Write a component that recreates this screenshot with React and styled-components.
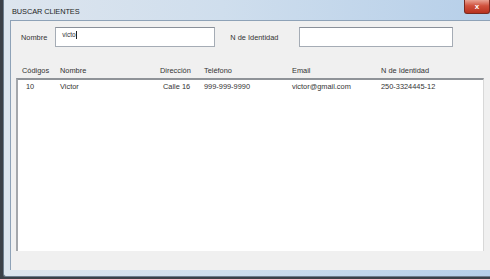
import styled, { createGlobalStyle } from 'styled-components';

const GlobalStyle = createGlobalStyle`
  html, body {
    margin: 0;
    padding: 0;
    background: #3b4048;
    overflow: hidden;
  }
  * { box-sizing: border-box; }
`;

const columns = [
  { title: 'Códigos', width: 38 },
  { title: 'Nombre', width: 100 },
  { title: 'Dirección', width: 44 },
  { title: 'Teléfono', width: 88 },
  { title: 'Email', width: 89 },
  { title: 'N de Identidad', width: 100 },
];

const rows = [
  ['10', 'Victor', 'Calle 16', '999-999-9990', 'victor@gmail.com', '250-3324445-12'],
];

export default function App() {
  return (<>
    <GlobalStyle />
    <Desktop>
      <Window>
        <TitleBar>
          <Title>BUSCAR CLIENTES</Title>
          <CloseButton>x</CloseButton>
        </TitleBar>
        <Client>
          <SearchRow>
            <Label>Nombre</Label>
            <TextBox $width={160}>
              victo<Caret />
            </TextBox>
            <Label $gap={15}>N de Identidad</Label>
            <TextBox $width={154} />
          </SearchRow>
          <Header>
            {columns.map(c => <HeaderCell key={c.title} $width={c.width}>{c.title}</HeaderCell>)}
          </Header>
          <ListBox>
            {rows.map((r, i) => (
              <Row key={i}>
                {r.map((v, j) => (
                  <Cell key={j} $width={columns[j].width} $indent={j === 0 ? 4 : j === 2 ? 3 : 0}>{v}</Cell>
                ))}
              </Row>
            ))}
          </ListBox>
        </Client>
      </Window>
    </Desktop>
  </>);
}

const Desktop = styled.div`
  width: 490px;
  height: 279px;
  display: flex;
  padding-left: 3px;
  overflow: hidden;
  font-family: "Liberation Sans", Arial, sans-serif;
`;

const Window = styled.div`
  width: 487px;
  height: 277px;
  display: flex;
  flex-direction: column;
  background: linear-gradient(90deg, #dde5ee 0%, #cfdeed 45%, #b6cfe9 100%);
  border-left: 1px solid #6d7d8d;
  border-bottom: 1px solid #6d7d8d;
  border-bottom-left-radius: 3px;
  padding: 0 0 6px 6px;
`;

const TitleBar = styled.div`
  height: 20px;
  display: flex;
  justify-content: space-between;
  align-items: flex-start;
`;

const Title = styled.div`
  font-size: 7.4px;
  color: #1e1e1e;
  padding: 7px 0 0 2px;
  letter-spacing: -0.1px;
`;

const CloseButton = styled.div`
  width: 26px;
  height: 14px;
  border-radius: 0 0 3px 3px;
  background: linear-gradient(180deg, #e9a394 0%, #d0513d 45%, #b8321f 100%);
  border: 1px solid #7a2a20;
  border-top: none;
  color: #fff;
  font-size: 8px;
  font-weight: bold;
  display: flex;
  align-items: center;
  justify-content: center;
`;

const Client = styled.div`
  flex: 1;
  background: #f0f0f0;
  border-left: 1px solid #8ea2b7;
  border-top: 1px solid #8ea2b7;
  padding: 6px 6px 19px 5px;
  display: flex;
  flex-direction: column;
`;

const SearchRow = styled.div`
  display: flex;
  align-items: center;
  padding-left: 5px;
  height: 20px;
`;

const Label = styled.span`
  font-size: 7.4px;
  color: #333;
  margin-left: ${p => p.$gap || 0}px;
  margin-right: ${p => p.$gap ? 21 : 8}px;
`;

const TextBox = styled.div`
  width: ${p => p.$width}px;
  height: 20px;
  background: #fff;
  border: 1px solid #a5acb5;
  border-top-color: #8a9099;
  font-size: 6.5px;
  color: #333;
  padding: 3px 0 0 6px;
  display: flex;
  align-items: flex-start;
`;

const Caret = styled.span`
  display: inline-block;
  width: 1px;
  height: 8px;
  background: #222;
  margin-left: 0.5px;
`;

const Header = styled.div`
  display: flex;
  padding-left: 6px;
  margin-top: 17px;
  height: 12px;
  align-items: center;
`;

const HeaderCell = styled.div`
  width: ${p => p.$width}px;
  flex-shrink: 0;
  font-size: 7.4px;
  color: #333;
  white-space: nowrap;
`;

const ListBox = styled.div`
  flex: 1;
  margin-top: 2px;
  width: 468px;
  background: #fff;
  border-top: 2px solid #8f9398;
  border-left: 2px solid #a4a7ab;
  border-right: 1px solid #d8d8d8;
  padding-top: 1px;
`;

const Row = styled.div`
  display: flex;
  padding-left: 4px;
  height: 10px;
  align-items: center;
`;

const Cell = styled.div`
  width: ${p => p.$width}px;
  flex-shrink: 0;
  padding-left: ${p => p.$indent}px;
  font-size: 7.4px;
  color: #333;
  white-space: nowrap;
`;
